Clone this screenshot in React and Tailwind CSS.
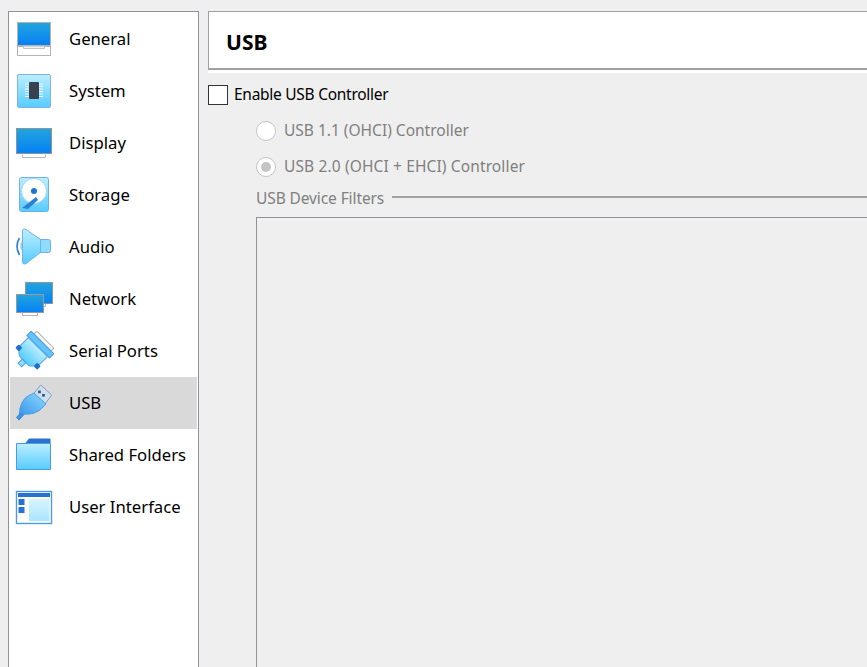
const Defs = () => (
  <svg width="0" height="0" className="absolute">
    <defs>
      <linearGradient id="scr" x1="0" y1="0" x2="0" y2="1">
        <stop offset="0" stopColor="#22a5dc" />
        <stop offset="1" stopColor="#0580f5" />
      </linearGradient>
      <linearGradient id="lt" x1="0" y1="0" x2="0" y2="1">
        <stop offset="0" stopColor="#bdeeff" />
        <stop offset="1" stopColor="#55ccff" />
      </linearGradient>
      <linearGradient id="usbg" x1="1" y1="0" x2="0" y2="1">
        <stop offset="0" stopColor="#8fdcff" />
        <stop offset="1" stopColor="#3a96ea" />
      </linearGradient>
      <linearGradient id="pale" x1="0" y1="0" x2="0" y2="1">
        <stop offset="0" stopColor="#d8f4ff" />
        <stop offset="1" stopColor="#a9e6ff" />
      </linearGradient>
    </defs>
  </svg>
);

const Svg = ({ children }) => (
  <svg width="40" height="40" viewBox="0 0 40 40" className="shrink-0">
    {children}
  </svg>
);

const icons = {
  General: (
    <Svg>
      <rect x="3.500" y="3.500" width="33" height="23" fill="url(#scr)" stroke="#b4b4b4" />
      <rect x="3.500" y="27.500" width="33" height="9" fill="#fff" stroke="#b4b4b4" />
      <path d="M9.500 27.500v2h21v-2" fill="#f2f2f2" stroke="#c4c4c4" />
    </Svg>
  ),
  System: (
    <Svg>
      <rect x="3.500" y="3.500" width="33" height="33" rx="1.500" fill="url(#lt)" stroke="#7fb2e6" />
      <path d="M11 13h18M11 15.500h18M11 18h18M11 20.500h18M11 23h18M11 25.500h18" stroke="#f2fbff" strokeWidth="1.100" />
      <rect x="15" y="11" width="10" height="17" rx="1" fill="#38424e" />
    </Svg>
  ),
  Display: (
    <Svg>
      <rect x="2.500" y="5.500" width="35" height="25" fill="url(#scr)" stroke="#8d949c" />
      <path d="M8.500 31.500v3h23v-3" fill="#fff" stroke="#b4b4b4" />
    </Svg>
  ),
  Storage: (
    <Svg>
      <rect x="5.500" y="2.500" width="29" height="34" rx="2" fill="url(#lt)" stroke="#6fb0ea" />
      <circle cx="20" cy="16" r="12.500" fill="#fff" stroke="#a7d8f5" />
      <path d="M8 33l14-11 2 3-10 9z" fill="#2a7fd6" />
      <circle cx="20" cy="16" r="3" fill="#1f76d2" />
    </Svg>
  ),
  Audio: (
    <Svg>
      <path d="M26.500 12.500h8a2 2 0 0 1 2 2v9a2 2 0 0 1-2 2h-8z" fill="#8fdcff" stroke="#6fb0ea" />
      <path d="M8.500 3.500q0-1.500 2-1.500 1.500 0 3 1.500l13 9v13l-13 10q-1.500 1.500-3 1.500-2 0-2-1.500z" fill="url(#lt)" stroke="#6fb0ea" />
      <path d="M5.500 11q-5 8 0 17" fill="none" stroke="#2c7fd4" strokeWidth="1.600" />
      <path d="M8 15q-2 4 0 8" fill="none" stroke="#9dc5ec" strokeWidth="1.400" />
    </Svg>
  ),
  Network: (
    <Svg>
      <path d="M31.500 24.500v3h-4v-3" fill="#fff" stroke="#b4b4b4" />
      <rect x="11.500" y="3.500" width="27" height="21" fill="url(#scr)" stroke="#8d949c" />
      <path d="M8.500 33.500v3h15v-3" fill="#fff" stroke="#b4b4b4" />
      <rect x="2.500" y="15.500" width="27" height="18" fill="url(#scr)" stroke="#9a9a9a" />
    </Svg>
  ),
  "Serial Ports": (
    <Svg>
      <g transform="rotate(45 20 20)">
        <rect x="8" y="4" width="24" height="4" fill="#fff" stroke="#b0b0b0" />
        <rect x="4" y="8" width="32" height="6" fill="#62c4f8" stroke="#4a9be6" />
        <path d="M6.500 14.500h27v10q-1 6-7 9.500h-13q-6-3.500-7-9.500z" fill="url(#lt)" stroke="#5aa5e8" />
        <rect x="4.500" y="26" width="5" height="5" rx="1" fill="#1d6fc8" />
        <rect x="30.500" y="26" width="5" height="5" rx="1" fill="#1d6fc8" />
        <rect x="17.500" y="34" width="5" height="6" fill="#8fdcff" stroke="#4a9be6" />
      </g>
    </Svg>
  ),
  USB: (
    <Svg>
      <path d="M20 10.300L26.700 2 37.700 12 31 21z" fill="#cfdfee" stroke="#7fa3c8" />
      <rect x="24.200" y="7.600" width="2.600" height="2.600" fill="#2c4d77" />
      <rect x="28.200" y="11" width="2.600" height="2.600" fill="#2c4d77" />
      <path d="M20 10Q13 13 11 15.300 7 20 6 25.300L5.500 31.500 16 31Q22 30 26 27L32 21z" fill="url(#usbg)" stroke="#4a9be6" />
      <path d="M6 30.500L2.500 34.500 5 37 9.500 32z" fill="#3a96ea" stroke="#3a86d4" />
    </Svg>
  ),
  "Shared Folders": (
    <Svg>
      <path d="M15 3.500h20.500a1 1 0 0 1 1 1v6h-27z" fill="#2a72d0" />
      <path d="M2.500 8.500h34v26h-34z" fill="url(#lt)" stroke="#4d9ae4" />
    </Svg>
  ),
  "User Interface": (
    <Svg>
      <rect x="2.500" y="4.500" width="35" height="32" fill="#fff" stroke="#4a9be6" strokeWidth="1.400" />
      <rect x="4" y="6" width="32" height="4" fill="#2a72d0" />
      <rect x="4.500" y="12" width="6" height="6" fill="#2a72d0" />
      <rect x="4.500" y="20" width="6" height="6" fill="#2a72d0" />
      <rect x="15" y="12" width="20.500" height="22" fill="url(#pale)" />
    </Svg>
  ),
};

const names = ["General", "System", "Display", "Storage", "Audio", "Network", "Serial Ports", "USB", "Shared Folders", "User Interface"];

export default function App() {
  return (
    <div
      className="flex h-[667px] w-[867px] overflow-hidden bg-[#efefef] pl-[8px] pt-[11px] text-black"
      style={{ fontFamily: '"Noto Sans", sans-serif' }}
    >
      <aside className="h-[700px] w-[191px] shrink-0 border-x border-t border-[#8f929a] bg-white px-px pt-px text-[16.700px]">
        {names.map((n) => (
          <div key={n} className={`flex h-[52px] items-center pl-[4px] ${n === "USB" ? "bg-[#d9d9d9]" : ""}`}>
            {icons[n]}
            <span className="ml-[15px] whitespace-nowrap pt-px leading-none">{n}</span>
          </div>
        ))}
      </aside>
      <main className="ml-[9px] min-w-0 flex-1 text-[15.500px]">
        <div className="flex h-[59px] items-center border-l border-t border-b-2 border-[#a0a0a0] bg-white pl-[17px] pt-[4px]">
          <h1 className="text-[21px] font-bold leading-none">USB</h1>
        </div>
        <div className="h-[3px] bg-white" />
        <label className="mt-[12px] flex h-[20px] items-center">
          <span className="h-[20px] w-[20px] border border-[#333] bg-white" />
          <span className="ml-[6px] leading-none tracking-[-0.27px]">Enable USB Controller</span>
        </label>
        <div className="ml-[48px] text-[#808080]">
          <div className="mt-[16px] flex h-[20px] items-center">
            <span className="h-[20px] w-[20px] rounded-full border border-[#c4c4c4] bg-white" />
            <span className="ml-[8px] leading-none">USB 1.1 (OHCI) Controller</span>
          </div>
          <div className="mt-[16px] flex h-[20px] items-center">
            <span className="flex h-[20px] w-[20px] items-center justify-center rounded-full border border-[#c4c4c4] bg-white">
              <span className="h-[10px] w-[10px] rounded-full bg-[#c4c4c4]" />
            </span>
            <span className="ml-[8px] leading-none tracking-[0.13px]">USB 2.0 (OHCI + EHCI) Controller</span>
          </div>
          <div className="mt-[12px] flex h-[20px] items-center">
            <span className="whitespace-nowrap leading-none tracking-[-0.1px]">USB Device Filters</span>
            <span className="mb-[4px] ml-[8px] h-[2px] flex-1 bg-[#a0a0a0]" />
          </div>
          <div className="mt-[8px] h-[500px] border-l border-t border-[#8f929a]" />
        </div>
      </main>
      <Defs />
    </div>
  );
}
